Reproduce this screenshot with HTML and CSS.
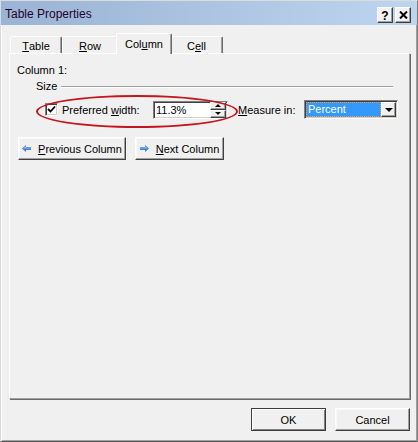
FILE: index.html
```html
<!DOCTYPE html>
<html lang="en">
<head>
<meta charset="UTF-8" />
<title>Table Properties</title>
<link rel="stylesheet" href="styles.css">
</head>
<body>
  <div class="dialog">
    <div class="titlebar">
      <span class="title">Table Properties</span>
      <div class="title-btns">
        <span class="tbtn help">?</span>
        <span class="tbtn"><svg width="9" height="8" viewBox="0 0 9 8"><path d="M1 0.5 L8 7.5 M8 0.5 L1 7.5" stroke="#000" stroke-width="2"/></svg></span>
      </div>
    </div>

    <div class="body">
      <div class="tabs">
        <div class="tab tab-table"><u>T</u>able</div>
        <div class="tab tab-row"><u>R</u>ow</div>
        <div class="tab tab-column active">Col<u>u</u>mn</div>
        <div class="tab tab-cell">C<u>e</u>ll</div>
      </div>

      <div class="panel">
        <div class="caption">Column 1:</div>
        <div class="group">
          <span>Size</span>
          <span class="rule"></span>
        </div>

        <div class="options">
          <span class="checkbox">
            <svg width="9" height="9" viewBox="0 0 9 9"><path d="M1 4 L3.5 6.5 L8 1.5" fill="none" stroke="#000" stroke-width="1.8"/></svg>
          </span>
          <span class="label-pref">Preferred <u>w</u>idth:</span>
          <div class="spin-input">
            <span class="value">11.3%</span>
            <div class="spinner">
              <span class="spin-btn"><i class="tri-up"></i></span>
              <span class="spin-btn"><i class="tri-down"></i></span>
            </div>
          </div>
          <span class="label-measure"><u>M</u>easure in:</span>
          <div class="select">
            <span class="select-value">Percent</span>
            <span class="select-btn"><i class="tri-down big"></i></span>
          </div>
        </div>

        <div class="nav">
          <div class="btn btn-prev">
            <svg width="9" height="7" viewBox="0 0 9 7"><polygon points="0,3.5 4,0 4,2 9,2 9,5 4,5 4,7" fill="#3d7fd9"/><polygon points="1,3.5 4,1 4,2.5 9,2.5 9,3.5" fill="#8fb9ef"/></svg>
            <span><u>P</u>revious Column</span>
          </div>
          <div class="btn btn-next">
            <svg width="9" height="7" viewBox="0 0 9 7"><polygon points="9,3.5 5,0 5,2 0,2 0,5 5,5 5,7" fill="#3d7fd9"/><polygon points="8,3.5 5,1 5,2.5 0,2.5 0,3.5" fill="#8fb9ef"/></svg>
            <span><u>N</u>ext Column</span>
          </div>
        </div>

        <div class="highlight"></div>
      </div>

      <div class="footer">
        <div class="btn btn-ok default">OK</div>
        <div class="btn btn-cancel">Cancel</div>
      </div>
    </div>
  </div>
</body>
</html>
```

FILE: styles.css
```css
* {
  box-sizing: border-box;
}
body {
  margin: 0;
  background: #f0f0f0;
  color: #000;
  font-family: "Liberation Sans", Arial, sans-serif;
  font-size: 11px;
}
u {
  text-decoration: underline;
  text-underline-offset: 1px;
}
.dialog {
  width: 418px;
  height: 442px;
  display: flex;
  flex-direction: column;
  background: #f0f0f0;
  border: 1px solid;
  border-color: #dcdcdc #808080 #5a5a5a #dcdcdc;
  box-shadow: inset 1px 1px 0 #fff, inset -1px -1px 0 #a0a0a0;
}

/* title bar */
.titlebar {
  height: 24px;
  flex: none;
  display: flex;
  justify-content: space-between;
  align-items: center;
  padding: 0 6px 0 4px;
  background: linear-gradient(to right, #9bb3d4, #bdd5ef);
}
.title {
  font-size: 12px;
  color: #26002e;
  padding-top: 1px;
}
.title-btns {
  display: flex;
  gap: 2px;
  align-self: flex-end;
  margin-bottom: 2px;
}
.tbtn {
  width: 16px;
  height: 16px;
  display: flex;
  align-items: center;
  justify-content: center;
  background: #f2f2f2;
  border: 1px solid;
  border-color: #fff #404040 #404040 #fff;
  box-shadow: inset -1px -1px 0 #a0a0a0;
}
.tbtn.help {
  font-weight: bold;
  font-size: 12px;
  padding-top: 1px;
}

/* body */
.body {
  flex: 1;
  display: flex;
  flex-direction: column;
  padding: 0 7px 0 8px;
}
.tabs {
  height: 28px;
  flex: none;
  display: flex;
  align-items: flex-end;
  padding-left: 1px;
}
.tab {
  height: 17px;
  display: flex;
  align-items: center;
  justify-content: center;
  padding-top: 2px;
  background: #f0f0f0;
  border: 1px solid;
  border-bottom: none;
  border-color: #fff #696969 transparent #fff;
  border-radius: 2px 2px 0 0;
  box-shadow: inset -1px 0 0 #a0a0a0;
}
.tab-table { width: 52px; }
.tab-row { width: 56px; }
.tab-column { width: 52px; }
.tab-cell { width: 53px; }
.tab.active {
  width: 56px;
  height: 21px;
  margin: 0 -2px -1px;
  padding-top: 0;
  position: relative;
  z-index: 2;
}

.panel {
  height: 346px;
  flex: none;
  position: relative;
  padding: 10px 7px 0;
  border: 1px solid;
  border-color: #fff #a0a0a0 #a0a0a0 #fff;
  box-shadow: 1px 1px 0 #696969;
}
.caption {
  line-height: 13px;
}
.group {
  margin: 3px 0 0 19px;
  display: flex;
  align-items: center;
  line-height: 13px;
}
.rule {
  flex: 1;
  height: 2px;
  margin: 1px 9px 0 4px;
  border-top: 1px solid #a0a0a0;
  border-bottom: 1px solid #fff;
}

.options {
  margin-top: 7px;
  height: 19px;
  display: flex;
  align-items: center;
}
.checkbox {
  width: 13px;
  height: 13px;
  margin-left: 28px;
  display: flex;
  align-items: center;
  justify-content: center;
  background: #fff;
  border: 1px solid;
  border-color: #808080 #fff #fff #808080;
  box-shadow: inset 1px 1px 0 #404040, inset -1px -1px 0 #d4d0c8;
}
.label-pref {
  width: 91px;
  margin-left: 4px;
}
.spin-input {
  width: 75px;
  height: 18px;
  display: flex;
  align-items: center;
  justify-content: space-between;
  padding: 0 1px 0 2px;
  background: #fff;
  border: 1px solid;
  border-color: #808080 #fff #fff #808080;
  box-shadow: inset 1px 1px 0 #404040, inset -1px -1px 0 #d4d0c8;
}
.spinner {
  width: 16px;
  height: 16px;
  display: flex;
  flex-direction: column;
}
.spin-btn {
  flex: 1;
  display: flex;
  align-items: center;
  justify-content: center;
  background: #f0f0f0;
  border: 1px solid;
  border-color: #fff #404040 #404040 #fff;
  box-shadow: inset -1px -1px 0 #a0a0a0;
}
.tri-up {
  width: 0;
  height: 0;
  border-left: 3px solid transparent;
  border-right: 3px solid transparent;
  border-bottom: 3px solid #000;
}
.tri-down {
  width: 0;
  height: 0;
  border-left: 3px solid transparent;
  border-right: 3px solid transparent;
  border-top: 3px solid #000;
}
.tri-down.big {
  border-left-width: 4px;
  border-right-width: 4px;
  border-top-width: 4px;
}
.label-measure {
  width: 66px;
  margin-left: 10px;
}
.select {
  width: 94px;
  height: 19px;
  display: flex;
  padding: 1px;
  background: #fff;
  border: 1px solid;
  border-color: #808080 #fff #fff #808080;
  box-shadow: inset 1px 1px 0 #404040, inset -1px -1px 0 #d4d0c8;
}
.select-value {
  width: 76px;
  padding-left: 2px;
  line-height: 15px;
  color: #fff;
  background: #3399ff;
  outline: 1px dotted #f59a3a;
  outline-offset: -1px;
}
.select-btn {
  width: 15px;
  display: flex;
  align-items: center;
  justify-content: center;
  background: #f0f0f0;
  border: 1px solid;
  border-color: #fff #404040 #404040 #fff;
  box-shadow: inset -1px -1px 0 #a0a0a0;
}

/* buttons */
.nav {
  margin: 18px 0 0 1px;
  display: flex;
  gap: 9px;
}
.btn {
  height: 23px;
  display: flex;
  align-items: center;
  justify-content: center;
  gap: 7px;
  background: #f0f0f0;
  border: 1px solid;
  border-color: #fff #404040 #404040 #fff;
  box-shadow: inset -1px -1px 0 #a0a0a0, inset 1px 1px 0 #f8f8f8;
}
.btn-prev { width: 108px; }
.btn-next { width: 89px; }
.btn.default {
  border-color: #3c3c3c;
  box-shadow: inset 1px 1px 0 #fff, inset -1px -1px 0 #808080;
}
.footer {
  flex: none;
  display: flex;
  justify-content: flex-end;
  gap: 9px;
  padding-top: 9px;
}
.btn-ok,
.btn-cancel {
  width: 75px;
}

/* red annotation ring */
.highlight {
  position: absolute;
  left: 26px;
  top: 41px;
  width: 202px;
  height: 33px;
  border: 2px solid #c4161c;
  border-radius: 50%;
}
```
